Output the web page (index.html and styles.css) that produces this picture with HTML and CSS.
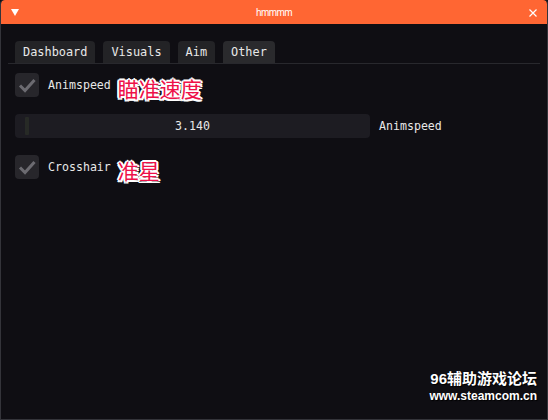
FILE: index.html
```html
<!DOCTYPE html>
<html lang="zh">
<head>
  <meta charset="UTF-8" />
  <meta name="viewport" content="width=device-width, initial-scale=1" />
  <title>hmmmm</title>
  <link rel="stylesheet" href="styles.css">
</head>
<body>
  <div class="window">
    <div class="titlebar">
      <span class="collapse"></span>
      <span class="title">hmmmm</span>
      <svg class="close" width="8" height="8" viewBox="0 0 8 8">
        <path d="M0.5 0.5 L7.5 7.5 M7.5 0.5 L0.5 7.5" stroke="#fff" stroke-width="1.2" />
      </svg>
    </div>

    <div class="body">
      <div class="tabbar">
        <div class="tab">Dashboard</div>
        <div class="tab">Visuals</div>
        <div class="tab">Aim</div>
        <div class="tab active">Other</div>
      </div>

      <div class="content">
        <div class="row">
          <span class="checkbox">
            <svg width="24" height="24" viewBox="0 0 24 24">
              <path d="M5 12.5 L10 17.5 L19.5 7" fill="none" stroke="#6c6b71" stroke-width="3" />
            </svg>
          </span>
          <span class="label">Animspeed</span>
          <span class="note">瞄准速度</span>
        </div>

        <div class="row">
          <div class="slider">
            <span class="grab"></span>
            <span class="value">3.140</span>
          </div>
          <span class="label side">Animspeed</span>
        </div>

        <div class="row">
          <span class="checkbox">
            <svg width="24" height="24" viewBox="0 0 24 24">
              <path d="M5 12.5 L10 17.5 L19.5 7" fill="none" stroke="#6c6b71" stroke-width="3" />
            </svg>
          </span>
          <span class="label">Crosshair</span>
          <span class="note">准星</span>
        </div>
      </div>
    </div>

    <div class="watermark">
      <div class="wm-name">96辅助游戏论坛</div>
      <div class="wm-url">www.steamcom.cn</div>
    </div>
  </div>
</body>
</html>
```

FILE: styles.css
```css
body {
  margin: 0;
  background: #0f0e13;
  font-family: 'DejaVu Sans Mono', monospace;
}

.window {
  position: relative;
  width: 548px;
  height: 420px;
  box-sizing: border-box;
  border: 1px solid #34343a;
  border-top: none;
  border-radius: 4px 4px 0 0;
  background: #0f0e13;
  overflow: hidden;
}

.titlebar {
  display: grid;
  grid-template-columns: 1fr auto 1fr;
  align-items: center;
  height: 24px;
  padding: 0 10px;
  background: #ff6633;
  border-radius: 4px 4px 0 0;
}

.collapse {
  width: 0;
  height: 0;
  border-left: 4px solid transparent;
  border-right: 4px solid transparent;
  border-top: 7px solid #fff;
  margin-top: 1px;
}

.title {
  font-family: 'Liberation Sans', Arial, sans-serif;
  font-size: 10px;
  letter-spacing: -0.6px;
  color: #fff;
  margin-top: 1px;
}

.close {
  justify-self: end;
  margin-top: 1px;
}

.body {
  padding: 0 7px;
}

.tabbar {
  display: flex;
  gap: 8px;
  margin-top: 17px;
  padding-left: 7px;
  border-bottom: 1px solid #28282d;
}

.tab {
  height: 22px;
  line-height: 22px;
  padding: 0 8px;
  background: #232326;
  border-radius: 4px 4px 0 0;
  color: #e8e8e8;
  font-size: 11.9px;
}

.tab.active {
  background: #2a2a2d;
}

.content {
  display: flex;
  flex-direction: column;
  gap: 17px;
  padding: 9px 7px 0;
}

.row {
  display: flex;
  align-items: center;
  height: 24px;
}

.checkbox {
  width: 24px;
  height: 24px;
  border-radius: 4px;
  background: #27262b;
  margin-right: 9px;
}

.checkbox svg {
  display: block;
}

.label {
  color: #e8e8e8;
  font-size: 11.6px;
}

.label.side {
  margin-left: 9px;
}

.note {
  margin-left: 7px;
  margin-top: 5px;
  font-family: 'Noto Sans CJK SC', sans-serif;
  font-size: 21px;
  line-height: 24px;
  color: #ee1149;
  text-shadow:
    2px 0 #fff, -2px 0 #fff, 0 2px #fff, 0 -2px #fff,
    1.5px 1.5px #fff, -1.5px 1.5px #fff, 1.5px -1.5px #fff, -1.5px -1.5px #fff;
}

.slider {
  position: relative;
  width: 355px;
  height: 24px;
  border-radius: 4px;
  background: #1d1c22;
}

.grab {
  position: absolute;
  left: 10px;
  top: 3px;
  width: 4px;
  height: 18px;
  border-radius: 1px;
  background: #272a26;
}

.value {
  display: block;
  text-align: center;
  line-height: 24px;
  color: #e8e8e8;
  font-size: 11.6px;
}

.watermark {
  position: absolute;
  right: 10px;
  bottom: 16px;
  text-align: right;
  color: #fff;
  font-family: 'Liberation Sans', 'Noto Sans CJK SC', sans-serif;
  font-weight: bold;
  text-shadow: 1px 1px 1px #000;
}

.wm-name {
  font-size: 15px;
  line-height: 18px;
  margin-bottom: 1px;
}

.wm-url {
  font-size: 12px;
  line-height: 14px;
}
```
